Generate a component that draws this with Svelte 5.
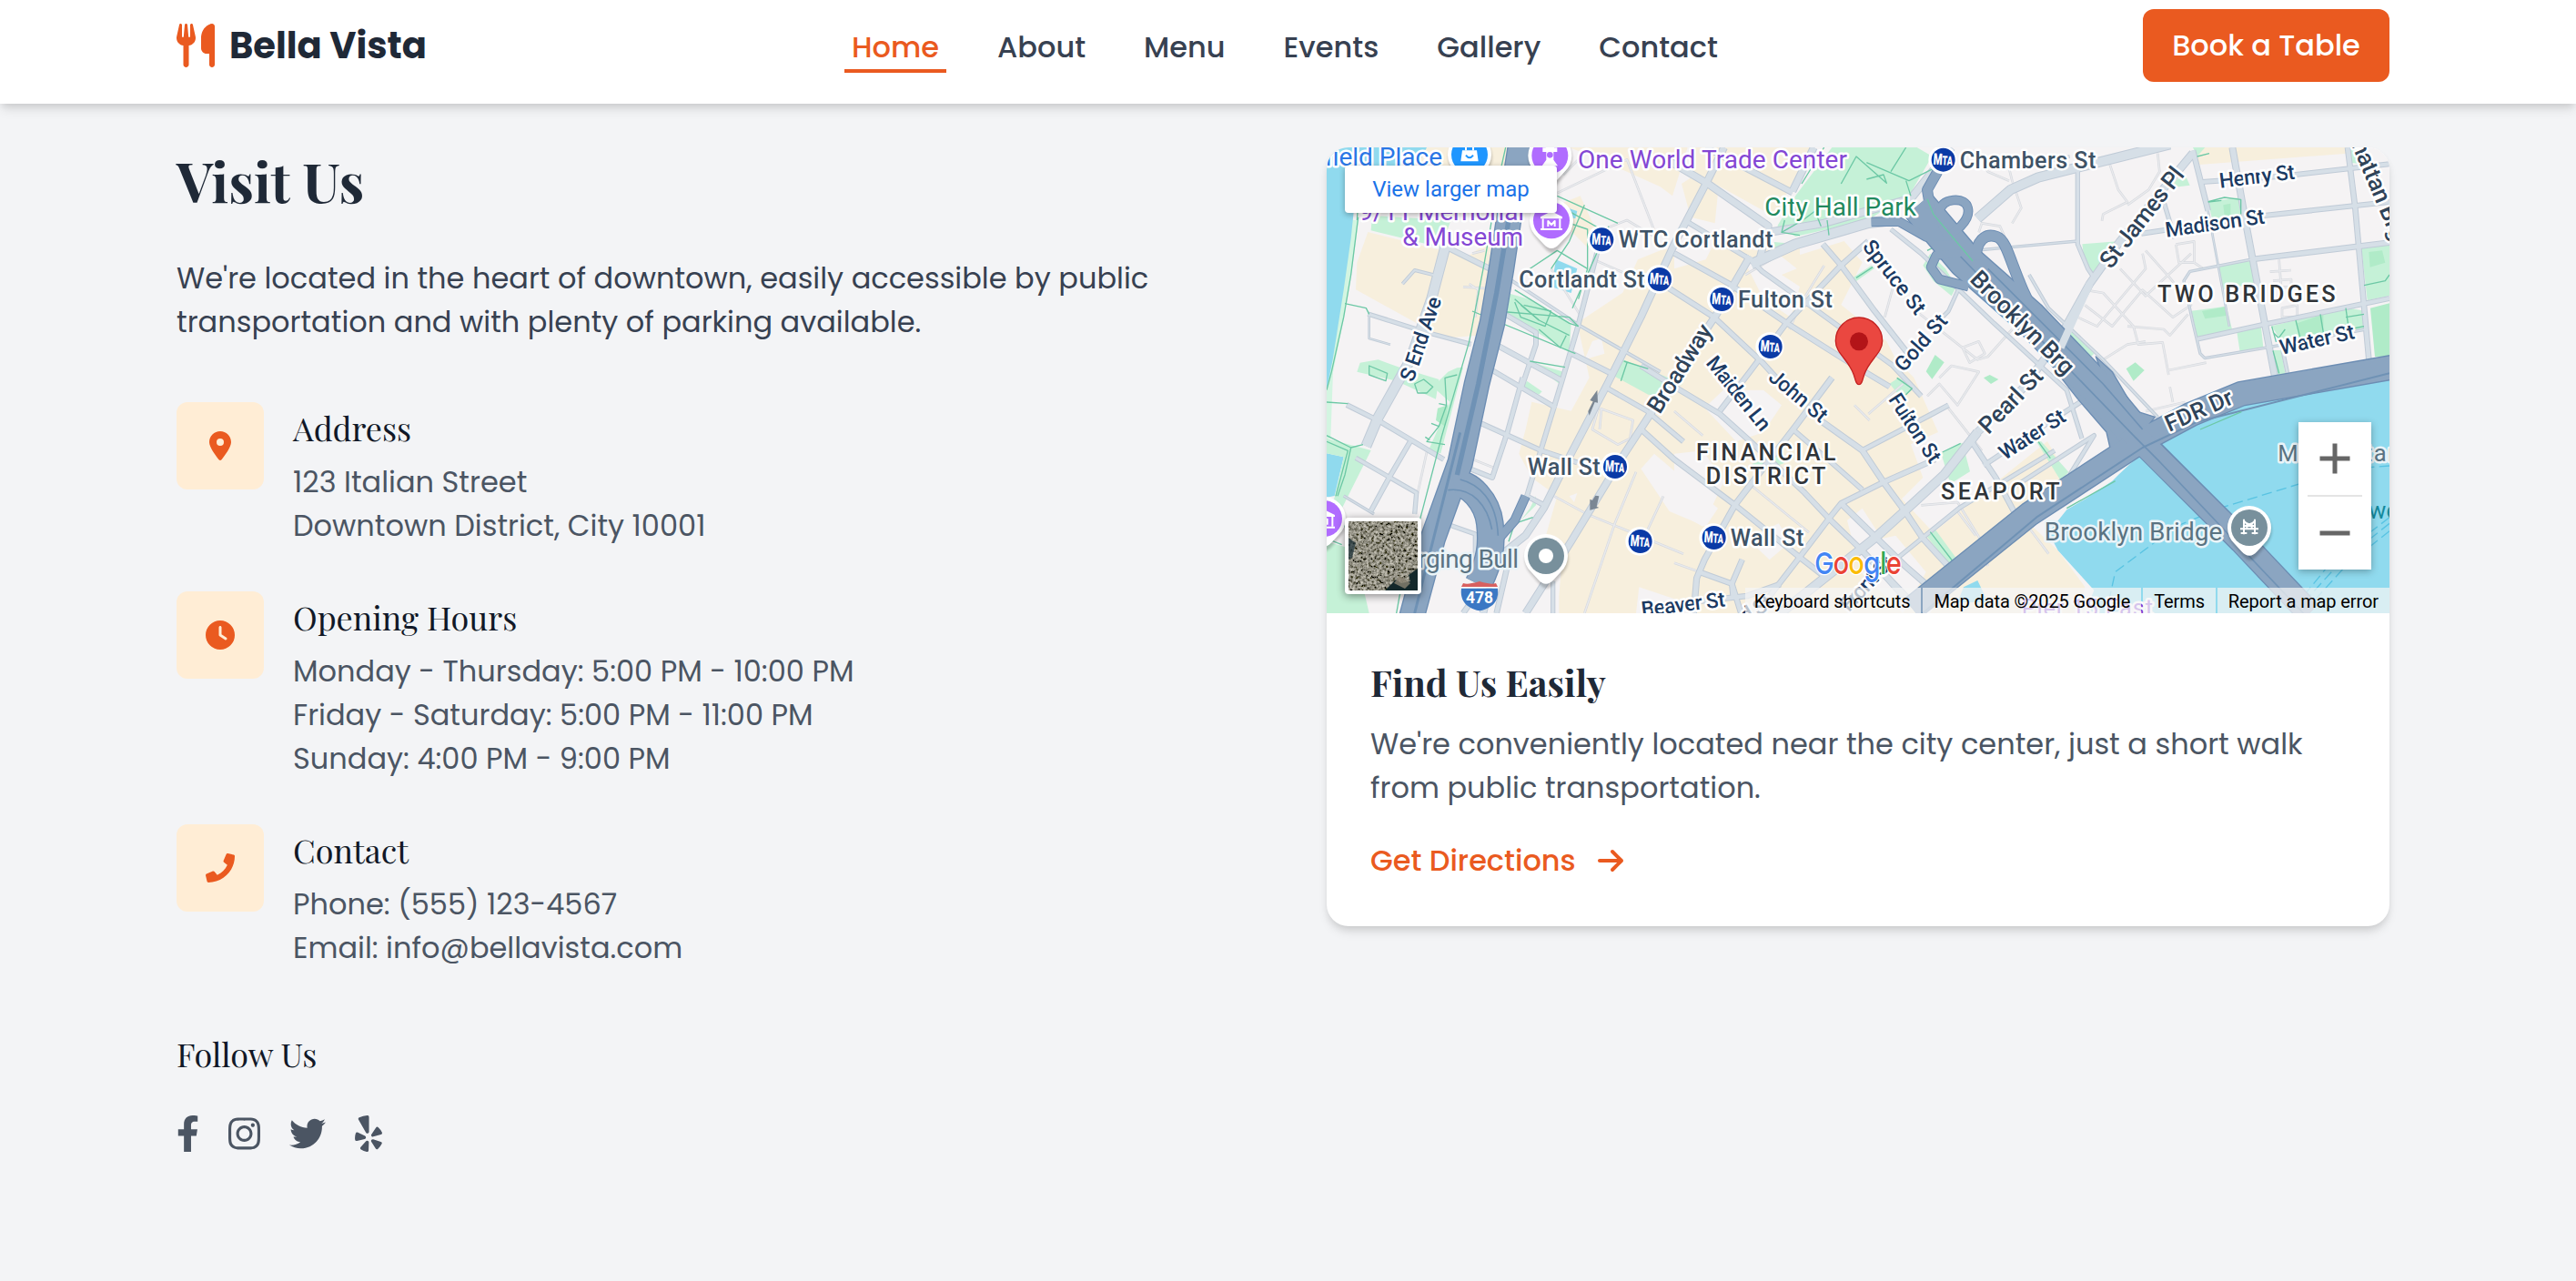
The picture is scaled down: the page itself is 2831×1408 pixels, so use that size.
<script>
  const nav = ['Home', 'About', 'Menu', 'Events', 'Gallery', 'Contact'];

  const info = [
    {
      title: 'Address', box: '0 0 384 512', w: 24,
      icon: 'M215.7 499.2C267 435 384 279.4 384 192C384 86 298 0 192 0S0 86 0 192c0 87.4 117 243 168.3 307.2c12.3 15.3 35.1 15.3 47.4 0zM192 128a64 64 0 1 1 0 128 64 64 0 1 1 0-128z',
      lines: ['123 Italian Street', 'Downtown District, City 10001']
    },
    {
      title: 'Opening Hours', box: '0 0 512 512', w: 32,
      icon: 'M256 0a256 256 0 1 1 0 512A256 256 0 1 1 256 0zM232 120V256c0 8 4 15.5 10.7 20l96 64c11 7.4 25.9 4.4 33.3-6.7s4.4-25.9-6.7-33.3L280 243.2V120c0-13.3-10.7-24-24-24s-24 10.7-24 24z',
      lines: ['Monday - Thursday: 5:00 PM - 10:00 PM', 'Friday - Saturday: 5:00 PM - 11:00 PM', 'Sunday: 4:00 PM - 9:00 PM']
    },
    {
      title: 'Contact', box: '0 0 512 512', w: 32,
      icon: 'M493.4 24.6l-104-24c-11.3-2.6-22.9 3.3-27.5 13.9l-48 112c-4.2 9.8-1.4 21.3 6.9 28l60.6 49.6c-36 76.7-98.9 140.5-177.2 177.2l-49.6-60.6c-6.8-8.3-18.2-11.1-28-6.9l-112 48C3.9 366.5-2 378.1.6 389.4l24 104C27.1 504.2 36.7 512 48 512c256.1 0 464-207.5 464-464 0-11.2-7.7-20.9-18.6-23.4z',
      lines: ['Phone: (555) 123-4567', 'Email: info@bellavista.com']
    }
  ];

  const socials = [
    { box: '0 0 320 512', w: 25, d: 'M279.14 288l14.22-92.66h-88.91v-60.13c0-25.35 12.42-50.06 52.24-50.06h40.42V6.26S260.43 0 225.36 0c-73.22 0-121.08 44.38-121.08 124.72v70.62H22.89V288h81.39v224h100.17V288z' },
    { box: '0 0 448 512', w: 35, d: 'M224.1 141c-63.6 0-114.9 51.3-114.9 114.9s51.3 114.9 114.9 114.9S339 319.5 339 255.9 287.7 141 224.1 141zm0 189.6c-41.1 0-74.7-33.5-74.7-74.7s33.5-74.7 74.7-74.7 74.7 33.5 74.7 74.7-33.6 74.7-74.7 74.7zm146.4-194.3c0 14.9-12 26.8-26.8 26.8-14.9 0-26.8-12-26.8-26.8s12-26.8 26.8-26.8 26.8 12 26.8 26.8zm76.1 27.2c-1.7-35.9-9.9-67.7-36.2-93.9-26.2-26.2-58-34.4-93.9-36.2-37-2.1-147.9-2.1-184.9 0-35.8 1.7-67.6 9.9-93.9 36.1s-34.4 58-36.2 93.9c-2.1 37-2.1 147.9 0 184.9 1.7 35.9 9.9 67.7 36.2 93.9s58 34.4 93.9 36.2c37 2.1 147.9 2.1 184.9 0 35.9-1.7 67.7-9.9 93.9-36.2 26.2-26.2 34.4-58 36.2-93.9 2.1-37 2.1-147.8 0-184.8zM398.8 388c-7.8 19.6-22.9 34.7-42.6 42.6-29.5 11.7-99.5 9-132.1 9s-102.7 2.6-132.1-9c-19.6-7.8-34.7-22.9-42.6-42.6-11.7-29.5-9-99.5-9-132.1s-2.6-102.7 9-132.1c7.8-19.6 22.9-34.7 42.6-42.6 29.5-11.7 99.5-9 132.1-9s102.7-2.6 132.1 9c19.6 7.8 34.7 22.9 42.6 42.6 11.7 29.5 9 99.5 9 132.1s2.7 102.7-9 132.1z' },
    { box: '0 0 512 512', w: 40, d: 'M459.37 151.716c.325 4.548.325 9.097.325 13.645 0 138.72-105.583 298.558-298.558 298.558-59.452 0-114.68-17.219-161.137-47.106 8.447.974 16.568 1.299 25.34 1.299 49.055 0 94.213-16.568 130.274-44.832-46.132-.975-84.792-31.188-98.112-72.772 6.498.974 12.995 1.624 19.818 1.624 9.421 0 18.843-1.3 27.614-3.573-48.081-9.747-84.143-51.98-84.143-102.985v-1.299c13.969 7.797 30.214 12.67 47.431 13.319-28.264-18.843-46.781-51.005-46.781-87.391 0-19.492 5.197-37.36 14.294-52.954 51.655 63.675 129.3 105.258 216.365 109.807-1.624-7.797-2.599-15.918-2.599-24.04 0-57.828 46.782-104.934 104.934-104.934 30.213 0 57.502 12.67 76.67 33.137 23.715-4.548 46.456-13.32 66.599-25.34-7.798 24.366-24.366 44.833-46.132 57.827 21.117-2.273 41.584-8.122 60.426-16.243-14.292 20.791-32.161 39.308-52.628 54.253z' },
    { box: '0 0 384 512', w: 30, d: 'M42.9 240.32l99.62 48.61c19.2 9.4 16.2 37.51-4.5 42.71L30.5 358.45a22.79 22.79 0 0 1-28.21-19.6 197.16 197.16 0 0 1 9-85.32 22.8 22.8 0 0 1 31.61-13.21zm44 239.25a199.45 199.45 0 0 0 79.42 32.11A22.78 22.78 0 0 0 192.94 490l3.9-110.82c.7-21.3-25.5-31.91-39.81-16.1l-74.21 82.4a22.82 22.82 0 0 0 4.09 34.09zm145.34-109.92l58.81 94a22.93 22.93 0 0 0 34 5.5 198.36 198.36 0 0 0 52.71-67.61A23 23 0 0 0 364.17 370l-105.42-34.26c-20.31-6.5-37.81 15.8-26.51 33.91zm148.33-132.23a197.44 197.44 0 0 0-50.41-69.31 22.85 22.85 0 0 0-34 4.4l-62 91.92c-11.9 17.7 4.7 40.61 25.2 34.71L366 268.63a23 23 0 0 0 14.61-31.21zM62.11 30.18a22.86 22.86 0 0 0-9.9 32l104.12 180.44c11.7 20.2 42.61 11.9 42.61-11.4V22.88a22.67 22.67 0 0 0-24.5-22.8 320.37 320.37 0 0 0-112.33 30.1z' }
  ];

  // Map geometry, in map units (three per pixel).
  const built = [
    '136,279 376,339 466,359 576,279 600,360 496,620 386,629 96,469 100,380',
    '300,0 606,0 580,90 470,220 330,230 250,200 300,60',
    '736,200 836,160 900,300 860,330 790,260',
    '720,30 776,0 1140,0 1190,0 1140,160 1100,130 900,40 800,0',
    '1196,0 1596,0 1476,229 1206,79',
    '1170,120 1216,90 1290,150 1280,250 1200,230',
    '1026,370 1100,340 1240,310 1420,340 1560,330 1560,359 1416,399 1706,309 1766,379 1696,519 1846,639 1876,699 1936,759 2016,939 1926,979 1966,1089 1896,1159 2000,1270 2100,1190 2376,969 2446,1089 2146,1309 1986,1449 1960,1536 766,1536 766,1479 776,1359 700,1360 760,1150 676,1089 634,1010 656,929 676,839 806,869 866,759 826,579 976,479',
    '2316,1240 2411,1329 2500,1449 2480,1536 1990,1536 2060,1420',
    '2866,0 3366,0 3366,20 2876,57'
  ];
  const gaps = [
    '1146,1200 1146,1010 1240,1000 1310,1100 1240,1250 1150,1200',
    '1246,859 1350,760 1380,800 1440,800 1500,850 1440,940 1350,970',
    '1146,260 1290,290 1250,370 1146,400',
    '1380,380 1500,360 1550,400 1500,420 1560,459 1530,560 1440,500',
    '1716,1230 1766,1190 1830,1290 1876,1280 1976,1400 1900,1536 1760,1400',
    '876,639 906,629 916,680 850,700',
    '1036,1060 1080,1010 1290,1190 1250,1250 1130,1200',
    '1020,1536 1030,1450 1180,1500 1190,1536',
    '800,1150 826,1140 816,1170',
    '1386,1290 1490,1240 1530,1300 1460,1360'
  ];
  const water = [
    '0,0 330,0 300,60 104,70 80,300 56,470 20,700 0,800',
    '0,1009 56,1021 26,1149 0,1154',
    '756,370 826,400 806,480 741,460',
    '796,200 826,210 820,235 800,230',
    '3504,762 3016,852 2746,960 2690,1005 2610,1080 2590,1100 2500,1160 2440,1195 2380,1270 2411,1329 2530,1460 2500,1536 3504,1536',
    '2100,1450 2146,1428 2180,1500 2080,1500'
  ];
  const parks = [
    '150,225 410,240 376,330 146,274',
    '596,480 666,500 806,579 800,676 596,549',
    '110,710 170,700 240,725 370,765 360,830 230,770 100,740',
    '0,960 146,999 36,1219 20,1180 56,1021 0,1009',
    '0,1299 66,1319 120,1450 140,1536 0,1536',
    '430,727 450,725 376,1009 336,999 406,839 350,790 400,740',
    '976,699 1176,779 1106,819 1060,815 940,750',
    '676,709 776,739 766,779',
    '660,770 710,805 700,815 650,790',
    '670,1190 690,1150 690,1180 640,1230',
    '1666,0 1946,0 1996,29 1926,149 1786,239 1546,294 1486,259 1546,159',
    '1476,312 1560,320 1476,340',
    '1736,429 1796,389 1806,399 1746,441',
    '1966,389 1990,350 2040,400 2076,459 2060,490 2000,440',
    '1856,779 1886,759 1936,794 1896,829',
    '2026,1009 2096,974 2121,1069 2056,1109',
    '1976,1279 2006,1259 2086,1369 2061,1389',
    '2491,319 2616,309 2526,419 2500,390',
    '2906,179 3011,165 3016,230 2920,239',
    '2936,389 3051,374 3056,449 2956,469',
    '2851,539 2966,524 2986,604 2871,629',
    '3001,609 3081,594 3088,659 3011,674',
    '3116,589 3366,529 3421,539 3421,599 3146,639',
    '3411,329 3504,322 3504,489 3431,504',
    '3116,669 3146,669 3161,749 3136,749',
    '3370,0 3400,0 3410,55 3375,50',
    '2856,0 2896,0 2870,30',
    '2780,120 2830,90 2846,125 2790,132',
    '2450,600 2530,680 2520,690 2440,610',
    '2340,970 2356,970 2446,1070 2420,1099',
    '1400,1045 1500,1005 1510,1040 1460,1060'
  ];
  const groves = [
    '1976,739 2006,684 2036,709 1996,764',
    '2636,730 2666,709 2696,735 2660,770',
    '2886,540 2960,526 2966,555 2896,565',
    '3200,580 3286,550 3286,610 3210,625',
    '3441,530 3504,514 3504,689 3456,690',
    '3436,345 3480,340 3490,380 3440,395',
    '2956,190 2980,185 2980,225 2960,225',
    '2190,780 2166,760 2186,750 2215,765',
    '366,860 400,850 390,920 360,900'
  ];
  const roads = [
    ['M1606 0 1536 144 M1396 359 1286 549 1126 789 976 1019 806 1299 656 1536', 26],
    ['M1310 0 1256 109 1146 319 1036 559 926 779 806 1009 716 1189 656 1279 556 1359 516 1536', 26],
    ['M1400 385 1546 319 1786 249 1880 239', 36],
    ['M1120 40 1256 119 1456 259 1426 374', 26],
    ['M1250 0 1536 149', 22],
    ['M1456 280 1640 250 1926 169 2060 0', 28],
    ['M1186 244 1396 369 1436 409 1576 509 1866 719 1960 820', 18],
    ['M1090 440 1276 559 1436 709 1546 830', 20],
    ['M1146 349 1326 449 1516 579 1706 699 1856 789', 20],
    ['M1636 319 1696 389 1806 539 1916 679', 20],
    ['M1786 309 1696 389 1516 579 1396 739 1296 869', 20],
    ['M1036 720 1146 789 1296 879 1396 969 1576 1139 1656 1224 1766 1330 1900 1480', 20],
    ['M1666 759 1546 919 1346 1179 1246 1359 1220 1420 1210 1536', 22],
    ['M2146 939 2036 1079 1906 1199 1806 1289 1496 1536', 32],
    ['M2146 939 2300 790 2416 629 2516 449 2616 309 2856 19', 28],
    ['M1626 899 1766 999 1836 1104 1906 1199 1966 1289 2066 1399', 22],
    ['M1766 999 1996 879 2050 850', 18],
    ['M1460 1480 1561 1349 1656 1224 1696 1174 1836 1104 2006 1029', 20],
    ['M1536 929 1676 1049 1766 1129', 18],
    ['M1036 929 1146 1029 1346 1179 1556 1349 1646 1419', 20],
    ['M1696 1174 1906 1379 1986 1449', 22],
    ['M1756 1320 1900 1470 1960 1536', 22],
    ['M1876 1359 2086 1189 2400 1000', 16],
    ['M2126 969 2206 1089 2276 1219', 20],
    ['M2166 1049 2346 929 2486 839', 18],
    ['M2250 1130 2530 950 2450 1080', 16],
    ['M1226 1399 1336 1439 1366 1536', 20],
    ['M1370 1359 1336 1439 1340 1480', 20],
    ['M1100 1510 1386 1479 1496 1440', 20],
    ['M396 309 346 499 276 700 170 890 130 985', 36],
    ['M66 849 176 904 386 1029', 18],
    ['M276 969 206 1089 146 1199', 18],
    ['M96 1024 296 1139 290 1209', 16],
    ['M56 1149 156 1209', 10],
    ['M136 549 326 609 476 649', 16],
    ['M586 549 690 610 690 650 640 800', 18],
    ['M646 759 596 939 546 1089 446 1049', 18],
    ['M396 329 576 419', 20],
    ['M596 430 836 589 976 669 1100 740', 12],
    ['M556 649 776 769', 20],
    ['M806 679 946 749', 20],
    ['M496 904 706 999 826 1039', 18],
    ['M896 329 826 599 776 769 706 999 660 1150 716 1179', 18],
    ['M546 735 756 859', 18],
    ['M916 789 1056 869 1176 970', 18],
    ['M746 1430 746 1536 M390 1240 490 1275 490 1380', 16],
    ['M596 1330 450 1536 M596 1380 560 1536', 20],
    ['M250 450 290 405 370 425', 12],
    ['M140 555 140 630 210 650', 8],
    ['M2146 235 2256 139 2346 99 2780 -10', 34],
    ['M2306 60 2450 30', 10],
    ['M2476 60 2476 319 2510 400 2530 430', 16],
    ['M2146 339 2256 329 2476 309', 10],
    ['M2856 10 2906 209', 20],
    ['M2906 209 2976 590', 8],
    ['M2986 0 3036 279 3126 756', 24],
    ['M3366 0 3391 199 3436 699', 20],
    ['M2886 114 3150 95 3504 55', 18],
    ['M2686 284 3090 225 3504 180', 18],
    ['M3051 369 3504 314', 20],
    ['M3051 369 2846 409 2826 440 2856 579 2880 680 2895 695 3106 659 3426 600', 10],
    ['M2871 632 3090 584 3504 498', 18],
    ['M3150 660 3170 755', 14],
    ['M2760 180 2796 300', 16],
    ['M1860 270 1960 350 2200 580 2440 800 2490 960', 16],
    ['M2316 420 2380 530 2560 700 2740 890', 12],
    ['M2100 430 2050 540 1990 600', 14]
  ];
  const lanes = [
    'M2580 50 2610 140 2640 180 2560 220 2556 242 M2740 20 2746 80 2710 140 2640 190',
    'M2500 470 2560 480 2660 590 2676 650 2756 643 2776 750 M2476 560 2540 590 2700 400 2690 350',
    'M2500 520 2590 590 2690 470 2790 560 2850 520 2780 430 2700 340 M2616 400 2700 490 2850 350',
    'M2640 590 2760 600 2780 620 2840 550 M2560 700 2640 650 2700 640 M2776 735 2900 710',
    'M2800 320 2860 310 2860 380 2810 380 2800 320 M2860 380 2890 400',
    'M3140 370 3150 500 M3110 410 3180 405 M3120 440 3180 435 3180 460 3120 460 M3150 530 3200 520 3200 560 3150 560Z',
    'M1840 560 1870 450 M1906 510 2146 700 2180 690 2260 600 M2096 660 2150 640 2170 680 2120 710Z',
    'M1980 820 2020 780 2080 850 2150 740 2060 720 2020 760 M2050 860 2160 1000',
    'M1790 900 1740 850 M1786 879 1900 780 M1960 1180 2080 1170 2160 1300 M1380 420 1500 350',
    'M1406 1120 1590 1270 M1146 870 1240 950 M1526 600 1560 520 1640 390 M1146 1370 1230 1400',
    'M750 1150 860 1210 1176 1340 M1020 1070 950 1240 850 1536 M1036 920 1180 760 M1110 1150 1040 1300',
    'M896 860 876 930 960 980 1000 960 1010 900 900 860 M906 860 900 930',
    'M880 370 1040 440 M740 400 840 560 M780 90 860 10 M720 170 990 40 1090 300 990 240 860 290',
    'M480 350 520 340 M470 450 500 470 490 560 M450 460 600 470 M500 380 590 430',
    'M330 1005 300 1140 M460 1020 560 1060',
    'M2500 790 2600 900 M2780 790 2790 840 M2700 870 2830 840 M2240 30 2260 110 2290 200 2260 250',
    'M2150 280 2160 250 2220 260 2300 440 M2130 10 2180 80 2250 110',
    'M2320 1260 2380 1340 M2080 1200 2140 1280 M2150 1310 2180 1380'
  ];
  const paths = [
    'M104 230 80 420 56 560 16 740 0 800 M60 515 130 530 140 550 M110 100 100 240',
    'M140 720 200 745 195 770 140 750Z M290 780 320 765 350 790 330 810 300 810Z M0 840 70 845',
    'M0 950 80 990 60 1080 36 1150 M80 990 120 980 M0 970 70 1000 30 1150 M50 1230 90 1310 70 1380 M0 1290 50 1310',
    'M590 0 570 90 520 380 470 640 380 950 320 1180 240 1480 230 1536',
    'M430 750 390 760 395 850 370 920 330 970 390 980 M370 920 345 910 M395 850 370 845 M340 965 325 955',
    'M760 160 960 250 M780 200 940 290 M770 240 860 270 860 400 830 500 M740 400 800 310 850 190 M620 470 800 580 830 590 M620 500 700 570 800 620 M640 420 760 340 860 400',
    'M620 510 640 560 720 590 740 540 650 520 M790 620 770 660 700 600 M640 520 700 570',
    'M480 540 820 680 M560 540 800 560 830 590 M930 260 810 530 M720 310 780 290',
    'M670 705 786 725 M980 705 1060 730 M990 710 970 770',
    'M1566 120 1640 0 M1696 120 1746 30 1846 118 1836 90 1780 105 M1780 50 1920 110 2000 70 M1860 80 1910 0 M1910 110 1926 160 M1630 260 1610 210 1570 240 1500 280 1560 290 M1650 240 1656 290 M1500 280 1510 240',
    'M1746 430 1800 395 M2000 100 1970 200 2130 380 M2100 230 2040 310 1980 340',
    'M2906 179 2960 165 3014 172 3014 220 M2906 180 2950 175 M3116 590 3130 640 3160 600 M3120 610 3150 640 M3195 570 3210 630 M3276 550 3286 610 M3360 530 3370 600 3420 590 M3360 560 3420 550 M3420 455 3490 440 3504 420',
    'M3120 670 3140 745 M2346 970 2386 1025 M2340 960 2360 990 M1990 1268 2076 1380 M1880 760 1930 795 1900 825 M2030 1005 2090 976',
    'M600 1300 620 1240 680 1220 M2870 30 2910 20'
  ];

  // Street names: x, y, angle, length, text, size, class
  const streets = [
    [285, 776, -71, 290, 'S End Ave', 69, 'st'],
    [1098, 882, -57.6, 330, 'Broadway', 78, 'av'],
    [1764, 328, 52, 290, 'Spruce St', 69, 'st'],
    [1903, 744, -49, 225, 'Gold St', 69, 'st'],
    [2117, 439, 45, 448, 'Brooklyn Brg', 79, 'av'],
    [1248, 712, 51, 294, 'Maiden Ln', 69, 'st'],
    [1453, 764, 40, 228, 'John St', 69, 'st'],
    [1850, 830, 57, 258, 'Fulton St', 69, 'st'],
    [2182, 949, -46, 265, 'Pearl St', 78, 'av'],
    [2236, 1033, -33, 245, 'Water St', 69, 'st'],
    [2778, 939, -24, 236, 'FDR Dr', 76, 'av'],
    [2586, 404, -52, 398, 'St James Pl', 79, 'av'],
    [2946, 134, -7, 250, 'Henry St', 69, 'st'],
    [2768, 296, -8, 330, 'Madison St', 69, 'st'],
    [3148, 684, -12.5, 250, 'Water St', 69, 'st'],
    [3378, -10, 67, 350, 'hattan Brg', 78, 'av'],
    [1040, 1547, -7, 278, 'Beaver St', 69, 'st'],
    [1722, 1534, -47, 220, 'Front St', 69, 'st'],
    [1380, 1570, -30, 110, 'd St', 69, 'st']
  ];
  // Places: x, y, length, text, size, class
  const places = [
    [828, 69, 888, 'One World Trade Center', 84, 'poi violet'],
    [106, 241, 545, '9/11 Memorial', 84, 'poi violet'],
    [250, 324, 398, '& Museum', 84, 'poi violet'],
    [962, 329, 509, 'WTC Cortlandt', 76, 'stn'],
    [634, 462, 415, 'Cortlandt St', 76, 'stn'],
    [1356, 527, 312, 'Fulton St', 76, 'stn'],
    [2087, 69, 449, 'Chambers St', 76, 'stn'],
    [1444, 224, 500, 'City Hall Park', 84, 'poi leaf'],
    [662, 1079, 240, 'Wall St', 76, 'stn'],
    [1331, 1314, 242, 'Wall St', 76, 'stn'],
    [160, 1387, 473, 'Charging Bull', 84, 'poi slate'],
    [2366, 1296, 587, 'Brooklyn Bridge', 84, 'poi slate'],
    [3136, 1034, 405, 'Manhattan', 77, 'poi slate'],
    [3436, 1224, 98, 'we', 76, 'poi teal'],
    [1218, 1032, 460, 'FINANCIAL', 76, 'area'],
    [1250, 1109, 395, 'DISTRICT', 76, 'area'],
    [2025, 1161, 392, 'SEAPORT', 76, 'area'],
    [2739, 509, 587, 'TWO BRIDGES', 76, 'area'],
    [2291, 1545, 433, 'Pier 15 East', 76, 'poi violet']
  ];
  const subway = [[907, 304], [1098, 435], [1303, 501], [1463, 657], [2033, 41], [951, 1053], [1034, 1299], [1277, 1287]];
  const pins = [
    { x: 471, y: 24, c: '#1f96ff', k: 'bag' },
    { x: 736, y: 27, c: '#b06cff', k: 'tower' },
    { x: 741, y: 241, c: '#b06cff', k: 'museum' },
    { x: -9, y: 1224, c: '#b06cff', k: 'museum' },
    { x: 723, y: 1347, c: '#78909c', k: 'dot' },
    { x: 3042, y: 1254, c: '#78909c', k: 'bridge' }
  ];
</script>

<header>
  <div class="brand">
    <svg width="42" height="48" viewBox="0 0 448 512" fill="currentColor"><path d="M416 0C400 0 288 32 288 176l0 112c0 35.3 28.7 64 64 64l32 0 0 128c0 17.7 14.3 32 32 32s32-14.3 32-32l0-128 0-112 0-208c0-17.7-14.3-32-32-32zM64 16C64 7.8 57.9 1 49.7 .1S34.2 4.6 32.4 12.5L2.1 148.8C.7 155.1 0 161.5 0 167.9c0 45.9 35.1 83.6 80 87.7L80 480c0 17.7 14.3 32 32 32s32-14.3 32-32l0-224.4c44.9-4.1 80-41.8 80-87.7c0-6.4-.7-12.8-2.1-19.1L191.6 12.5c-1.8-8-9.3-13.3-17.4-12.4S160 7.8 160 16l0 134.2c0 5.4-4.4 9.8-9.8 9.8c-5.1 0-9.3-3.9-9.8-9L127.9 14.6C127.2 6.3 120.3 0 112 0s-15.2 6.3-15.9 14.6L83.7 151c-.5 5.1-4.7 9-9.8 9c-5.4 0-9.8-4.4-9.8-9.8L64 16zm48.3 152l-.3 0-.3 0 .3-.7 .3 .7z" /></svg>
    <span>Bella Vista</span>
  </div>
  <nav>
    {#each nav as item, i}
      <a href="#{item.toLowerCase()}" class:active={i === 0}>{item}</a>
    {/each}
  </nav>
  <button>Book a Table</button>
</header>

<main>
  <section class="visit">
    <h2>Visit Us</h2>
    <p class="lead">We're located in the heart of downtown, easily accessible by public transportation and with plenty of parking available.</p>
    <div class="items">
      {#each info as item}
        <div class="item">
          <div class="tile">
            <svg width={item.w} height="32" viewBox={item.box} fill="currentColor"><path d={item.icon} /></svg>
          </div>
          <div>
            <h3>{item.title}</h3>
            {#each item.lines as line}<p>{line}</p>{/each}
          </div>
        </div>
      {/each}
    </div>
    <h3>Follow Us</h3>
    <div class="social">
      {#each socials as s}
        <svg width={s.w} height="40" viewBox={s.box} fill="currentColor"><path d={s.d} /></svg>
      {/each}
    </div>
  </section>

  <article class="card">
    <div class="map">
      <svg class="canvas" viewBox="0 0 3504 1536" width="1168" height="512">
        <rect width="3504" height="1536" fill="#f5f3f4" />
        {#each built as p}<polygon points={p} fill="#f7efdd" />{/each}
        {#each gaps as p}<polygon points={p} fill="#f5f3f4" />{/each}
        <path d="M92 240 68 420 44 560 8 740 0 960" class="shore" />
        {#each water as p}<polygon points={p} fill="#90daee" />{/each}
        {#each parks as p}<polygon points={p} fill="#c5f1d7" />{/each}
        {#each groves as p}<polygon points={p} fill="#b0ebc8" />{/each}
        {#each lanes as d}<path {d} class="lane-edge" />{/each}
        {#each lanes as d}<path {d} class="lane" />{/each}
        {#each roads as r}<path d={r[0]} class="road-edge" stroke-width={r[1]} />{/each}
        {#each roads as r}<path d={r[0]} class="road" stroke-width={Math.max(r[1] - 6, 3)} />{/each}
        {#each paths as d}<path {d} class="trail" />{/each}
        <g class="ferry">
          <path d="M3504 1050 3370 1060 2960 1185 2800 1250 2600 1400 2570 1536" />
          <path d="M3504 1240 3340 1370 3240 1480M3504 1265 3360 1380 3260 1490M3504 1220 3310 1370 3220 1480" />
        </g>
        <g class="hwy-edge">
          <path d="M640 -10 600 240 576 400 546 579 495 780 440 1040 350 1290 280 1550" stroke-width="86" />
          <path d="M420 1110C470 1100 530 1170 538 1240S540 1360 500 1440" stroke-width="92" />
          <path d="M656 1150 620 1230 550 1310" stroke-width="32" />
          <path d="M1950 190 2106 375 2316 560 2546 800 2686 969" stroke-width="118" />
          <path d="M2686 969 3016 1299 3240 1536" stroke-width="84" />
          <path d="M1930 1520 2316 1210 2686 968 2850 880 3016 812 3520 724" stroke-width="84" />
          <path d="M1796 246 1886 244 1976 295 2060 295" stroke-width="32" />
          <path d="M2014 80 1980 140 1990 200" stroke-width="36" />
          <path d="M2046 290C2010 230 2010 180 2066 174S2130 220 2090 260L2040 300" stroke-width="32" />
          <path d="M2140 370C2140 310 2170 280 2210 295S2260 420 2330 540" stroke-width="38" />
          <path d="M2090 350 2010 355 1992 395 2020 435 2116 459" stroke-width="32" />
        </g>
        <g class="wedge">
          <path d="M2406 740 2556 800 2650 960 2584 996 2571 939 2476 829Z" />
          <path d="M2536 690 2590 740 2666 869 2731 889 2686 945 2620 920Z" />
        </g>
        <g class="hwy">
          <path d="M640 -10 600 240 576 400 546 579 495 780 440 1040 350 1290 280 1550" stroke-width="78" />
          <path d="M420 1110C470 1100 530 1170 538 1240S540 1360 500 1440" stroke-width="84" />
          <path d="M656 1150 620 1230 550 1310" stroke-width="26" />
          <path d="M1950 190 2106 375 2316 560 2546 800 2686 969" stroke-width="110" />
          <path d="M1796 246 1886 244 1976 295 2060 295" stroke-width="26" />
          <path d="M2014 80 1980 140 1990 200" stroke-width="30" />
          <path d="M2046 290C2010 230 2010 180 2066 174S2130 220 2090 260L2040 300" stroke-width="26" />
          <path d="M2140 370C2140 310 2170 280 2210 295S2260 420 2330 540" stroke-width="32" />
          <path d="M2090 350 2010 355 1992 395 2020 435 2116 459" stroke-width="26" />
          <path d="M1930 1520 2316 1210 2686 968 2850 880 3016 812 3520 724" stroke-width="76" />
          <path d="M2640 925 3016 1299 3240 1536" stroke-width="76" />
        </g>
        <g class="seam">
          <path d="M610 180 560 480 500 780 430 1080" stroke-width="16" />
          <path d="M440 940 380 1180 290 1536" stroke-width="9" />
          <path d="M2090 360 2360 640 2660 950 2740 1030 3220 1536" stroke-width="5" />
          <path d="M2180 400 2560 780 2690 930" stroke-width="5" />
          <path d="M1960 1540 2340 1220 2690 990 2870 905 3504 745" stroke-width="6" />
          <path d="M400 1130C480 1120 530 1180 545 1260M440 1095C500 1110 560 1160 565 1280" stroke-width="5" />
        </g>
        <path d="M1980 170 2000 220 2130 375" class="trail" />
        <path d="M2880 930 3016 872M2600 1100 2440 1190" class="trail" />
        <path d="M2420 660 2516 449" class="road" stroke-width="24" />

        {#each streets as s}
          <text class={s[6]} x="0" y="0" font-size={s[5]} textLength={s[3]} transform="translate({s[0]} {s[1]}) rotate({s[2]})">{s[4]}</text>
        {/each}
        <text class="poi blue" x="381" y="59" font-size="84" text-anchor="end">Brookfield Place</text>
        {#each places as p}
          <text class={p[5]} x={p[0]} y={p[1]} font-size={p[4]} textLength={p[2]}>{p[3]}</text>
        {/each}

        <g fill="#7b8794"><path d="M866 884 862 870 878 838 868 834 892 800 894 842 884 840Z" /><path d="M898 1150 890 1184 898 1188 868 1196 868 1160 876 1164 886 1148Z" /></g>

        {#each subway as b}
          <g transform="translate({b[0]} {b[1]})">
            <circle r="47" cx="-2" fill="#fff" /><circle r="39" fill="#0a3aa6" />
            <text class="mta" x="-33" y="17" font-size="42" textLength="64" lengthAdjust="spacingAndGlyphs" transform="rotate(3)"><tspan font-size="52">M</tspan>TA</text>
          </g>
        {/each}

        {#each pins as p}
          <g transform="translate({p.x} {p.y})">
            <path class="shade" d="M0 102C-10 102-18 94-28 82L-52 54A72 72 0 1 1 52 54L28 82C18 94 10 102 0 102Z" transform="translate(2 5)" />
            <path d="M0 92C-10 92-16 88-26 78L-50 52A72 72 0 1 1 50 52L26 78C16 88 10 92 0 92Z" fill="#fff" />
            <circle r="60" fill={p.c} />
            {#if p.k === 'bag'}
              <path d="M-29 22-24 -14H24L29 22Z" fill="#fff" /><path d="M-12 -14V-22Q-12 -30 0 -30T12 -22V-14" class="line" /><path d="M-12 2Q0 18 12 2" fill="none" stroke={p.c} stroke-width="6" />
            {:else if p.k === 'tower'}
              <path d="M-24 -26H-14V-34H14V-26H24V-12H12V14H-12V-12H-24ZM-26 34 -12 14H12L26 34Z" fill="#fff" /><circle cy="-2" r="10" fill={p.c} />
            {:else if p.k === 'museum'}
              <path d="M-36 -12 0 -30 36 -12V-6H-36ZM-36 26H36V32H-36Z" fill="#fff" /><path d="M-28 -6V26M28 -6V26M-11 20V2L0 14 11 2V20" class="line" />
            {:else if p.k === 'dot'}
              <circle r="24" fill="#fff" />
            {:else}
              <path d="M-18 -28V22M18 -28V22M-30 4H30M-28 18H-8M8 18H28M-18 -22Q0 0 18 -22M-8 -12V4M8 -12V4M-18 -6H18" class="line" stroke-width="5" />
            {/if}
          </g>
        {/each}

        <g transform="translate(444 1429)">
          <path d="M6 8Q18 12 34 8 48 6 60 2 72 6 86 8 102 12 114 8L120 20H0Z" fill="#d8605f" />
          <path d="M0 20H120V25H0Z" fill="#fff" />
          <path d="M0 25H120C124 58 112 88 60 99 8 88-4 58 0 25Z" fill="#3b78c4" />
          <text class="shield" x="15" y="75" font-size="56" textLength="90" lengthAdjust="spacingAndGlyphs">478</text>
        </g>

        <path d="M1755 782C1745 782 1744 768 1738 750 1722 700 1678 680 1678 638A77 77 0 0 1 1832 638C1832 680 1788 700 1772 750 1766 768 1765 782 1755 782Z" fill="#ea4740" stroke="#c32120" stroke-width="4" />
        <circle cx="1755" cy="640" r="30" fill="#b31418" />

        <text class="google" x="1610" y="1408" font-size="100" textLength="284" lengthAdjust="spacingAndGlyphs"><tspan fill="#4285f4">G</tspan><tspan fill="#ea4335">o</tspan><tspan fill="#fbbc05">o</tspan><tspan fill="#4285f4">g</tspan><tspan fill="#34a853">l</tspan><tspan fill="#ea4335">e</tspan></text>
      </svg>

      <a class="larger" href="#map">View larger map</a>
      <svg class="satellite" width="84" height="84" viewBox="0 0 84 84">
        <filter id="terrain" x="0" y="0" width="1" height="1">
          <feTurbulence type="fractalNoise" baseFrequency="0.34" numOctaves="4" seed="7" />
          <feColorMatrix values="1.1 .2 0 0 -.37  1.06 .2 0 0 -.36  .96 .2 0 0 -.36  0 0 0 0 1" />
        </filter>
        <rect width="84" height="84" rx="4" fill="#fff" />
        <rect x="4" y="4" width="76" height="76" filter="url(#terrain)" />
        <path d="M80 56 70 63 72 70 62 72 56 68 44 80H80Z" fill="#14282b" />
        <path d="M60 64 72 72 66 78 54 72Z" fill="#8a8272" opacity=".8" />
        <path d="M4 22 12 28 8 44 4 46Z" fill="#1a2f38" opacity=".7" />
      </svg>
      <div class="zoom">
        <svg width="80" height="162" viewBox="0 0 80 162"><path d="M23.5 40H56.5M40 23.5V56.500M23.5 122H56.5" stroke="#666" stroke-width="5" /><path d="M10 81H70" stroke="#e4e4e4" stroke-width="2" /></svg>
      </div>
      <div class="legal">
        <span>Keyboard shortcuts</span><span>Map data ©2025 Google</span><span>Terms</span><span>Report a map error</span>
      </div>
    </div>
    <div class="details">
      <h4>Find Us Easily</h4>
      <p>We're conveniently located near the city center, just a short walk from public transportation.</p>
      <a href="#directions">Get Directions
        <svg width="28" height="32" viewBox="0 0 448 512" fill="currentColor"><path d="M438.6 278.6c12.5-12.5 12.5-32.8 0-45.3l-160-160c-12.5-12.5-32.8-12.5-45.3 0s-12.5 32.8 0 45.3L338.8 224 32 224c-17.7 0-32 14.3-32 32s14.3 32 32 32l306.7 0L233.4 393.4c-12.5 12.5-12.5 32.8 0 45.3s32.8 12.5 45.3 0l160-160z" /></svg>
      </a>
    </div>
  </article>
</main>

<style>
  :global(body) {
    margin: 0;
    background: #f3f4f6;
    font-family: Poppins, Inter, sans-serif;
    font-size: 32px;
    line-height: 48px;
  }
  h2, h3, h4, p { margin: 0; }
  a { text-decoration: none; }
  svg { display: block; flex: none; }

  header {
    box-sizing: border-box;
    height: 114px;
    padding: 0 205px 14px 194px;
    display: flex;
    align-items: center;
    background: #fff;
    box-shadow: 0 8px 12px -2px rgba(0, 0, 0, .1), 0 4px 8px -2px rgba(0, 0, 0, .1);
    position: relative;
  }
  .brand {
    width: 734px;
    display: flex;
    align-items: center;
    gap: 16px;
    color: #ea5a20;
  }
  .brand span { color: #1f2937; font-size: 40px; font-weight: 700; }
  nav { display: flex; gap: 48px; align-self: flex-start; padding-top: 28px; }
  nav a {
    padding: 0 8px;
    color: #374151;
    font-weight: 500;
    border-bottom: 4px solid transparent;
  }
  nav a.active { color: #ea5a20; border-color: #ea5a20; }
  button {
    margin-left: auto;
    width: 271px;
    height: 80px;
    padding: 0;
    border: 0;
    border-radius: 12px;
    background: #ea5a20;
    color: #fff;
    font: 500 32px/48px Poppins, Inter, sans-serif;
    white-space: nowrap;
  }

  main {
    display: grid;
    grid-template-columns: 1168px 1168px;
    gap: 96px;
    align-items: start;
    padding: 48px 0 0 194px;
  }
  h2 {
    font: 700 60px/72px 'Playfair Display', 'Liberation Serif', serif;
    color: #1f2937;
    margin-bottom: 48px;
  }
  h3 {
    font: 400 36px/56px 'Playfair Display', 'Liberation Serif', serif;
    color: #111827;
  }
  .lead { color: #374151; max-width: 1120px; margin-bottom: 64px; }
  .items { display: flex; flex-direction: column; gap: 48px; margin-bottom: 64px; }
  .item { display: flex; gap: 32px; color: #4b5563; }
  .item h3 { margin-bottom: 8px; }
  .tile {
    width: 96px;
    height: 96px;
    flex: none;
    display: grid;
    place-items: center;
    border-radius: 12px;
    background: #ffedd5;
    color: #ea5a20;
  }
  .social { display: flex; gap: 32px; padding-top: 40px; color: #4b5563; }

  .card {
    background: #fff;
    border-radius: 24px;
    overflow: hidden;
    box-shadow: 0 8px 12px -2px rgba(0, 0, 0, .1), 0 4px 8px -2px rgba(0, 0, 0, .1);
  }
  .details { padding: 48px; color: #4b5563; }
  h4 {
    font: 700 40px/56px 'Playfair Display', 'Liberation Serif', serif;
    color: #1f2937;
    margin-bottom: 16px;
  }
  .details p { margin-bottom: 32px; }
  .details a { display: flex; align-items: center; gap: 24px; color: #ea5a20; font-weight: 500; }

  .map { position: relative; height: 512px; font-family: Roboto, sans-serif; overflow: hidden; }
  .larger {
    position: absolute;
    left: 20px;
    top: 20px;
    width: 233px;
    height: 52px;
    border-radius: 4px;
    background: #fff;
    color: #1a73e8;
    font-size: 24px;
    line-height: 52px;
    text-align: center;
    box-shadow: 0 2px 6px rgba(0, 0, 0, .3);
  }
  .satellite { position: absolute; left: 20px; top: 407px; filter: drop-shadow(0 2px 5px rgba(0, 0, 0, .45)); }
  .zoom { position: absolute; left: 1068px; top: 302px; background: #fff; box-shadow: 0 2px 8px rgba(0, 0, 0, .3); }
  .legal {
    position: absolute;
    right: 0;
    bottom: 0;
    height: 28px;
    display: flex;
    color: #000;
    font-size: 20px;
    line-height: 31px;
    letter-spacing: -.1px;
    white-space: nowrap;
  }
  .legal span { padding: 0 12px; margin-left: 2px; background: rgba(245, 245, 245, .72); }
  .legal span:first-child { padding-left: 10px; }

  .canvas path { stroke-linejoin: round; }
  .shore { fill: none; stroke: #d3f5e1; stroke-width: 26; }
  .road-edge { fill: none; stroke: #c0cbd7; }
  .road { fill: none; stroke: #d6dfe7; }
  .lane-edge { fill: none; stroke: #d6d9de; stroke-width: 8; }
  .lane { fill: none; stroke: #e9eaed; stroke-width: 4; }
  .trail { fill: none; stroke: #6cc8a5; stroke-width: 4; }
  .ferry { fill: none; stroke: #58c3e2; stroke-width: 4; stroke-dasharray: 34 16; }
  .hwy-edge { fill: none; stroke: #6c8db3; }
  .hwy { fill: none; stroke: #8ba5c1; }
  .wedge { fill: #8ba5c1; stroke: #6c8db3; stroke-width: 4; }
  .seam { fill: none; stroke: #6f92b5; }
  .shade { fill: #000; opacity: .22; filter: blur(4px); }
  .line { fill: none; stroke: #fff; stroke-width: 6; }
  .canvas text {
    font-family: Roboto, sans-serif;
    paint-order: stroke;
    stroke: #fff;
    stroke-width: 15px;
    stroke-linejoin: round;
  }
  .canvas .st { fill: #1b3a62; font-weight: 500; }
  .canvas .av { fill: #2f4358; font-weight: 500; }
  .canvas .stn { fill: #3f5366; font-weight: 500; }
  .canvas .area { fill: #303438; font-weight: 500; }
  .canvas .violet { fill: #8447d4; }
  .canvas .leaf { fill: #21895e; }
  .canvas .slate { fill: #5a7382; stroke: #eaf4f8; }
  .canvas .teal { fill: #14899c; stroke: none; }
  .canvas .blue { fill: #2a77e6; }
  .canvas .mta { fill: #fff; stroke: none; font-weight: 900; }
  .canvas .shield { fill: #fff; stroke: none; font-weight: 700; }
  .canvas .google { font-family: Poppins, Inter, sans-serif; font-weight: 500; stroke-width: 8px; }
</style>
